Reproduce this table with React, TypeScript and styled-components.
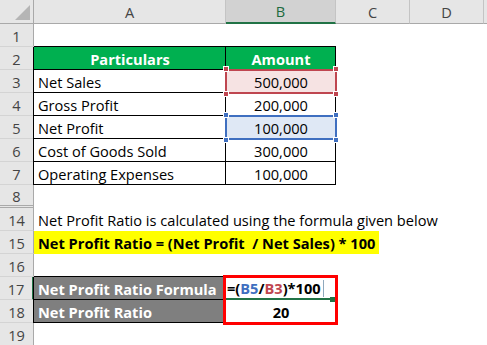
import { ReactNode } from "react";
import styled, { createGlobalStyle, css } from "styled-components";

const GlobalStyle = createGlobalStyle`
  *, *::before, *::after {
    box-sizing: border-box;
  }

  html, body {
    margin: 0;
    padding: 0;
    background: #fff;
  }
`;

const FONT = `"Open Sans", "Noto Sans", "Liberation Sans", sans-serif`;

type RefColor = "red" | "blue";
type Frame = "top" | "bottom";

const refColors: Record<RefColor, { line: string; fill: string }> = {
  red: { line: "#bf4650", fill: "#f6e3e3" },
  blue: { line: "#3f6fc0", fill: "#dfe8f5" },
};

interface CellProp {
  $fill?: string;
  $bold?: boolean;
  $light?: boolean;
  $center?: boolean;
  $box?: boolean;
  $under?: boolean;
  $edge?: boolean;
  $ref?: RefColor;
  $active?: boolean;
  $frame?: Frame;
}

const shadowsFor = (p: CellProp) => {
  const list: string[] = [];
  if (p.$box) list.push("inset -1px -1px 0 #000");
  if (p.$under) list.push("inset 0 -1px 0 #000");
  if (p.$edge) list.push("-1px 0 0 #000");
  return list.length ? list.join(", ") : "none";
};

export default function App() {
  return (
    <>
      <GlobalStyle />
      <Sheet>
        <Corner>
          <svg width="34" height="24" viewBox="0 0 34 24">
            <polygon points="30,5 30,20 15,20" fill="#b5b5b5" />
          </svg>
        </Corner>
        <ColHeader>A</ColHeader>
        <ColHeader $active>B</ColHeader>
        <ColHeader>C</ColHeader>
        <ColHeader>D</ColHeader>
        <ColHeader />

        <Row n={1}>
          <Cell $under />
          <Cell $under />
        </Row>
        <Row n={2}>
          <Cell $fill="#00b050" $light $bold $center $box $edge>
            Particulars
          </Cell>
          <Cell $fill="#00b050" $light $bold $center $box>
            Amount
          </Cell>
        </Row>
        <Row n={3}>
          <Cell $box $edge>Net Sales</Cell>
          <Cell $box $center $ref="red">
            500,000
            <Handles color={refColors.red.line} />
          </Cell>
        </Row>
        <Row n={4}>
          <Cell $box $edge>Gross Profit</Cell>
          <Cell $box $center>200,000</Cell>
        </Row>
        <Row n={5}>
          <Cell $box $edge>Net Profit</Cell>
          <Cell $box $center $ref="blue">
            100,000
            <Handles color={refColors.blue.line} />
          </Cell>
        </Row>
        <Row n={6}>
          <Cell $box $edge>Cost of Goods Sold</Cell>
          <Cell $box $center>300,000</Cell>
        </Row>
        <Row n={7}>
          <Cell $box $edge>Operating Expenses</Cell>
          <Cell $box $center>100,000</Cell>
        </Row>
        <Row n={8} hiddenBelow>
          <Cell />
          <Cell />
        </Row>
        <Row n={14}>
          <Cell>Net Profit Ratio is calculated using the formula given below</Cell>
          <Cell />
        </Row>
        <Row n={15}>
          <Cell $bold>
            <Highlight>Net Profit Ratio = (Net Profit&nbsp; / Net Sales) * 100</Highlight>
          </Cell>
          <Cell />
        </Row>
        <Row n={16}>
          <Cell $under />
          <Cell />
        </Row>
        <Row n={17} active>
          <Cell $fill="#7f7f7f" $light $bold $box $edge>
            Net Profit Ratio Formula
          </Cell>
          <Cell $bold $active $frame="top">
            =(<RefText $color={refColors.blue.line}>B5</RefText>/
            <RefText $color={refColors.red.line}>B3</RefText>)*100
            <Caret />
            <FillHandle />
          </Cell>
        </Row>
        <Row n={18}>
          <Cell $fill="#7f7f7f" $light $bold $box $edge>
            Net Profit Ratio
          </Cell>
          <Cell $bold $center $frame="bottom">
            20
          </Cell>
        </Row>
        <Row n={19}>
          <Cell />
          <Cell />
        </Row>
      </Sheet>
    </>
  );
}

interface RowProp {
  n: number;
  active?: boolean;
  hiddenBelow?: boolean;
  children: ReactNode;
}

const Row = ({ n, active = false, hiddenBelow = false, children }: RowProp) => (
  <>
    <RowHeader $active={active} $hiddenBelow={hiddenBelow}>
      {n}
    </RowHeader>
    {children}
    <Cell />
    <Cell />
    <Cell />
  </>
);

const Handles = ({ color }: { color: string }) => (
  <>
    <Handle $color={color} $top $left />
    <Handle $color={color} $top />
    <Handle $color={color} $left />
    <Handle $color={color} />
  </>
);

const Sheet = styled.div`
  display: grid;
  grid-template-columns: 34px 192px 110px 74px 74px 1fr;
  grid-template-rows: 24px;
  grid-auto-rows: 23px;

  width: 487px;
  height: 345px;
  overflow: hidden;

  font-family: ${FONT};
  font-size: 14.6px;
  color: #000;
`;

const Corner = styled.div`
  background-color: #e6e6e6;
  border-right: 1px solid #a9a9a9;
  border-bottom: 1px solid #a9a9a9;

  svg {
    display: block;
  }
`;

const ColHeader = styled.div<{ $active?: boolean }>`
  display: flex;
  align-items: center;
  justify-content: center;

  background-color: ${(p) => (p.$active ? "#d2d2d2" : "#e6e6e6")};
  color: ${(p) => (p.$active ? "#1e6b3f" : "#444")};
  border-right: 1px solid #c4c4c4;
  border-bottom: ${(p) => (p.$active ? "2px solid #217346" : "1px solid #a9a9a9")};
`;

const RowHeader = styled.div<{ $active: boolean; $hiddenBelow: boolean }>`
  display: flex;
  align-items: center;
  justify-content: center;
  padding-top: 1px;

  background-color: #e6e6e6;
  color: #444;
  border-right: ${(p) => (p.$active ? "2px solid #217346" : "1px solid #a9a9a9")};
  border-bottom: ${(p) => (p.$hiddenBelow ? "3px double #a9a9a9" : "1px solid #d4d4d4")};
`;

const Cell = styled.div<CellProp>`
  position: ${(p) => (p.$ref || p.$active || p.$frame ? "relative" : "static")};
  display: flex;
  align-items: center;
  justify-content: ${(p) => (p.$center ? "center" : "flex-start")};
  padding: 1px 4px 0;
  min-width: 0;
  white-space: nowrap;

  background-color: ${(p) => (p.$ref ? refColors[p.$ref].fill : p.$fill ?? "transparent")};
  color: ${(p) => (p.$light ? "#fff" : "#000")};
  font-weight: ${(p) => (p.$bold ? 700 : 400)};
  box-shadow: ${(p) => shadowsFor(p)};

  ${(p) =>
    p.$ref &&
    css`
      outline: 2px solid ${refColors[p.$ref].line};
      outline-offset: -1px;
    `}

  ${(p) =>
    p.$active &&
    css`
      padding-left: 1px;
      border-bottom: 2px solid #217346;
    `}

  ${(p) =>
    p.$frame &&
    css`
      &::after {
        content: "";
        position: absolute;
        left: -3px;
        right: -2px;
        top: -2px;
        bottom: -2px;
        border: 3px solid #ff0000;
        ${p.$frame === "top" ? "border-bottom: none;" : "border-top: none;"}
        z-index: 2;
        pointer-events: none;
      }
    `}
`;

const Handle = styled.span<{ $color: string; $top?: boolean; $left?: boolean }>`
  position: absolute;
  ${(p) => (p.$top ? "top: -4px;" : "bottom: -4px;")}
  ${(p) => (p.$left ? "left: -3px;" : "right: -3px;")}
  width: 6px;
  height: 6px;
  background-color: ${(p) => p.$color};
  border: 1px solid #fff;
`;

const RefText = styled.span<{ $color: string }>`
  color: ${(p) => p.$color};
`;

const Caret = styled.span`
  display: inline-block;
  width: 1px;
  height: 17px;
  margin-left: 2px;
  background-color: #8fa9bd;
`;

const FillHandle = styled.span`
  position: absolute;
  right: 1px;
  bottom: -4px;
  width: 5px;
  height: 5px;
  background-color: #217346;
`;

const Highlight = styled.span`
  display: flex;
  align-items: center;
  flex: none;
  align-self: stretch;
  width: 345px;
  margin: -1px 0 0 -4px;
  padding: 1px 4px 0;
  background-color: #ffff00;
`;
